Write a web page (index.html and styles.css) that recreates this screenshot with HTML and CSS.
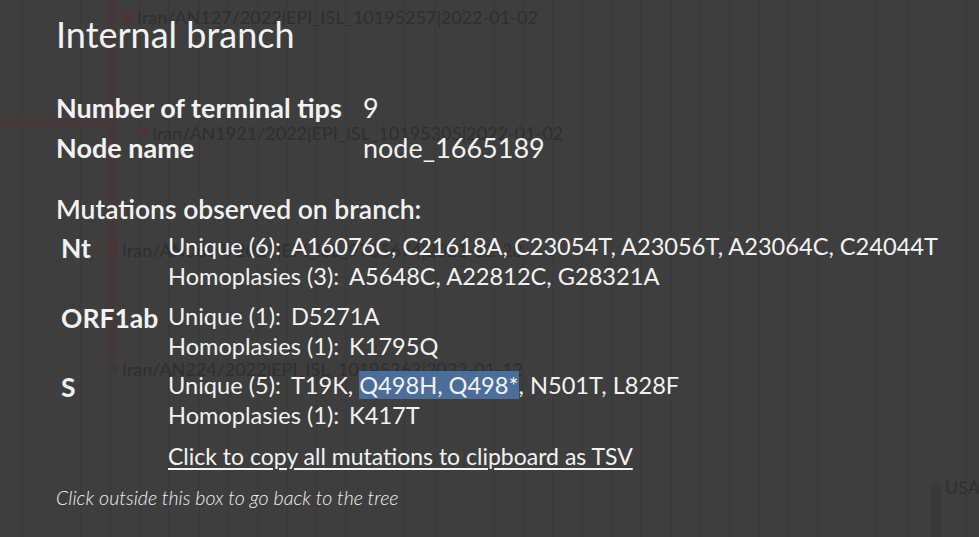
FILE: index.html
```html
<!DOCTYPE html>
<html lang="en">
<head>
<meta charset="utf-8">
<title>Internal branch</title>
<link rel="stylesheet" href="styles.css">
</head>
<body>
<div class="tree" aria-hidden="true">
  <div class="branch branch-v"></div>
  <div class="branch branch-h"></div>
  <div class="tip tip-1"><span class="dot"></span><span class="label">Iran/AN127/2022|EPI_ISL_10195257|2022-01-02</span></div>
  <div class="tip tip-2"><span class="dot"></span><span class="label">Iran/AN1921/2022|EPI_ISL_10195305|2022-01-02</span></div>
  <div class="tip tip-3"><span class="dot"></span><span class="label">Iran/AN0604/2021|EPI_ISL_9735674|2021-12-28</span></div>
  <div class="tip tip-4"><span class="dot grey"></span><span class="label">Iran/AN224/2022|EPI_ISL_10195263|2022-01-12</span></div>
  <div class="usa-line"></div>
  <div class="tip tip-5"><span class="dot grey"></span><span class="label">USA</span></div>
</div>

<main class="panel">
  <h1 class="title">Internal branch</h1>

  <div class="facts">
    <div class="fact-key">Number of terminal tips</div><div class="fact-val">9</div>
    <div class="fact-key">Node name</div><div class="fact-val">node_1665189</div>
  </div>

  <h2 class="mut-head">Mutations observed on branch:</h2>

  <div class="genes">
    <div class="gene">Nt</div>
    <div class="muts">
      <div class="line">Unique (6):<span class="list">A16076C, C21618A, C23054T, A23056T, A23064C, C24044T</span></div>
      <div class="line">Homoplasies (3):<span class="list">A5648C, A22812C, G28321A</span></div>
    </div>

    <div class="gene">ORF1ab</div>
    <div class="muts">
      <div class="line">Unique (1):<span class="list">D5271A</span></div>
      <div class="line">Homoplasies (1):<span class="list">K1795Q</span></div>
    </div>

    <div class="gene">S</div>
    <div class="muts">
      <div class="line">Unique (5):<span class="list">T19K, <span class="sel">Q498H, Q498*</span>, N501T, L828F</span></div>
      <div class="line">Homoplasies (1):<span class="list">K417T</span></div>
    </div>

    <div class="gene"></div>
    <div class="muts">
      <a class="copy" href="#">Click to copy all mutations to clipboard as TSV</a>
    </div>
  </div>

  <p class="hint">Click outside this box to go back to the tree</p>
</main>
</body>
</html>
```

FILE: styles.css
```css
html, body {
  margin: 0;
  padding: 0;
}

body {
  width: 979px;
  height: 537px;
  overflow: hidden;
  position: relative;
  background-color: #3e3e3e;
  background-image: repeating-linear-gradient(90deg,
    transparent 0px, transparent 21px,
    #3b3b3b 21px, #3b3b3b 23px,
    transparent 23px, transparent 29.5px);
  font-family: Lato, "Open Sans", "DejaVu Sans", sans-serif;
  color: #f2f2f2;
}

/* faded tree canvas behind the dialog */
.tree {
  position: absolute;
  inset: 0;
  z-index: 0;
}
.branch {
  position: absolute;
  background: #453838;
}
.branch-v {
  left: 107px;
  top: 0;
  width: 11px;
  height: 362px;
}
.branch-h {
  left: 0;
  top: 118px;
  width: 118px;
  height: 10px;
}
.tip {
  position: absolute;
  display: flex;
  align-items: center;
  gap: 4px;
  font-size: 18px;
  color: #2f2f2f;
  white-space: nowrap;
}
.dot {
  width: 11px;
  height: 11px;
  border-radius: 50%;
  background: #4e3434;
}
.dot.grey {
  background: #3a3a3a;
}
.tip-1 { left: 122px; top: 6px; }
.tip-2 { left: 137px; top: 122px; }
.tip-3 { left: 107px; top: 239px; }
.tip-4 { left: 107px; top: 358px; }
.tip-5 { left: 930px; top: 476px; }
.usa-line {
  position: absolute;
  left: 931px;
  top: 492px;
  width: 10px;
  height: 45px;
  background: #383838;
}

/* dialog */
.panel {
  position: relative;
  z-index: 1;
  padding: 12px 0 0 56px;
}
.title {
  margin: 0;
  font-size: 36px;
  font-weight: 400;
  line-height: 44px;
}
.facts {
  margin-top: 32px;
  display: grid;
  grid-template-columns: 307px auto;
  font-size: 27px;
  line-height: 40px;
}
.fact-key {
  font-weight: 700;
}
.mut-head {
  margin: 25px 0 0;
  font-size: 26.5px;
  font-weight: 600;
  line-height: 32px;
}
.genes {
  margin-top: 6px;
  margin-left: 5px;
  display: grid;
  grid-template-columns: 107px auto;
  row-gap: 9.5px;
}
.gene {
  font-size: 26.5px;
  font-weight: 700;
  line-height: 30px;
  padding-top: 2px;
}
.line {
  font-size: 23.6px;
  line-height: 30px;
  white-space: nowrap;
}
.list {
  margin-left: 10px;
}
.sel {
  background: #4a6d99;
}
.copy {
  display: inline-block;
  margin-top: 1.5px;
  font-size: 23px;
  line-height: 30px;
  color: #f2f2f2;
  text-decoration: underline;
  text-underline-offset: 3px;
  text-decoration-thickness: 1.5px;
}
.hint {
  margin: 12px 0 0;
  font-size: 19.6px;
  line-height: 30px;
  font-style: italic;
  font-weight: 300;
}
```
